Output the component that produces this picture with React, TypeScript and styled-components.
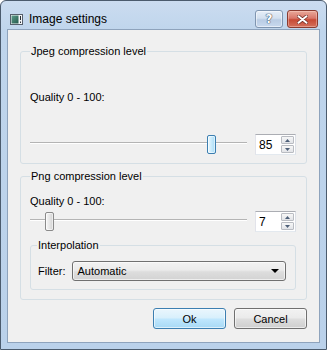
import styled, { createGlobalStyle } from 'styled-components';

const GlobalStyle = createGlobalStyle`
  html, body {
    margin: 0;
    padding: 0;
    background: #ffffff;
  }

  body {
    font-family: "Liberation Sans", Arial, sans-serif;
    font-size: 11px;
    color: #000;
  }
`;

function WindowIcon() {
  return (
    <svg width="13" height="11" viewBox="0 0 13 11">
      <defs>
        <linearGradient id="ico" x1="0" y1="0" x2="1" y2="1">
          <stop offset="0" stopColor="#5c9c8a" />
          <stop offset="1" stopColor="#245a4c" />
        </linearGradient>
      </defs>
      <rect x="0.5" y="0.5" width="12" height="10" fill="#f4f6f8" stroke="#56606c" />
      <rect x="1.5" y="1.5" width="7" height="8" fill="url(#ico)" />
      <rect x="10" y="2" width="1" height="4" fill="#2a2f36" />
      <rect x="10" y="7.5" width="1" height="1.5" fill="#2a2f36" />
    </svg>
  );
}

function CloseGlyph() {
  return (
    <svg width="11" height="9" viewBox="0 0 11 9">
      <path d="M1.5 1.2 L9.5 7.8 M9.5 1.2 L1.5 7.8" stroke="#6e2a22" strokeWidth="3.4" strokeLinecap="round" />
      <path d="M1.5 1.2 L9.5 7.8 M9.5 1.2 L1.5 7.8" stroke="#ffffff" strokeWidth="2" strokeLinecap="round" />
    </svg>
  );
}

function Arrow({ up, size = 5, color = '#4d5f78' }: { up?: boolean; size?: number; color?: string }) {
  const h = Math.ceil(size / 2) + 0;
  return (
    <svg width={size} height={h} viewBox={`0 0 ${size} ${h}`}>
      <path d={up ? `M0 ${h} L${size / 2} 0 L${size} ${h} Z` : `M0 0 L${size} 0 L${size / 2} ${h} Z`} fill={color} />
    </svg>
  );
}

type SliderProps = { value: number; hot?: boolean };

function Slider({ value, hot }: SliderProps) {
  return (
    <SliderTrackArea>
      <Groove />
      <Thumb $hot={hot} style={{ left: `calc((100% - 9px) * ${value / 100})` }} />
    </SliderTrackArea>
  );
}

function SpinBox({ value }: { value: number }) {
  return (
    <SpinField>
      <SpinValue>{value}</SpinValue>
      <SpinButtons>
        <SpinButton>
          <Arrow up />
        </SpinButton>
        <SpinButton>
          <Arrow />
        </SpinButton>
      </SpinButtons>
    </SpinField>
  );
}

function App() {
  return (
    <>
      <GlobalStyle />
      <Window>
        <TitleBar>
          <WindowIcon />
          <TitleText>Image settings</TitleText>
          <CaptionButtons>
            <HelpButton>?</HelpButton>
            <CloseButton>
              <CloseGlyph />
            </CloseButton>
          </CaptionButtons>
        </TitleBar>
        <Client>
          <Group $pb={8}>
            <Legend>Jpeg compression level</Legend>
            <FieldLabel $mt={33}>Quality 0 - 100:</FieldLabel>
            <SliderRow $mt={30}>
              <Slider value={85} hot />
              <SpinBox value={85} />
            </SliderRow>
          </Group>
          <Group $pb={9} style={{ marginTop: 6 }}>
            <Legend>Png compression level</Legend>
            <FieldLabel $mt={12}>Quality 0 - 100:</FieldLabel>
            <SliderRow $mt={3}>
              <Slider value={7} />
              <SpinBox value={7} />
            </SliderRow>
            <InnerGroup>
              <InnerLegend>Interpolation</InnerLegend>
              <FilterRow>
                <span>Filter:</span>
                <Combo>
                  <ComboText>Automatic</ComboText>
                  <Arrow size={8} color="#000" />
                </Combo>
              </FilterRow>
            </InnerGroup>
          </Group>
          <ButtonRow>
            <PushButton $default>Ok</PushButton>
            <PushButton>Cancel</PushButton>
          </ButtonRow>
        </Client>
      </Window>
    </>
  );
}

export default App;

const Window = styled.div`
  width: 327px;
  height: 350px;
  box-sizing: border-box;
  display: flex;
  flex-direction: column;
  padding: 0 6px 6px;
  border: 1px solid #4b5b6d;
  border-radius: 6px 6px 0 0;
  background: linear-gradient(180deg, #cbdcf0 0%, #bfd5ec 30px, #bad1ea 100%);
`;

const TitleBar = styled.div`
  height: 28px;
  box-sizing: border-box;
  display: flex;
  align-items: center;
  padding: 8px 2px 0 3px;
`;

const TitleText = styled.div`
  flex: 1;
  margin-left: 6px;
  font-size: 12px;
  color: #000;
`;

const CaptionButtons = styled.div`
  display: flex;
  gap: 4px;
`;

const CaptionButton = styled.div`
  height: 18px;
  box-sizing: border-box;
  display: flex;
  align-items: center;
  justify-content: center;
  border-radius: 3px;
`;

const HelpButton = styled(CaptionButton)`
  width: 28px;
  border: 1px solid #7f95b0;
  background: linear-gradient(180deg, #e6eef8 0%, #d3e0ef 45%, #b9cce4 55%, #c8d9ee 100%);
  box-shadow: inset 0 0 0 1px rgba(255, 255, 255, 0.5);
  font-family: "DejaVu Sans", sans-serif;
  font-weight: bold;
  font-size: 12px;
  color: #ffffff;
  text-shadow: 0 0 1px #3b4b60, 0 0 1px #3b4b60, 0 0 1px #3b4b60;
`;

const CloseButton = styled(CaptionButton)`
  width: 31px;
  border: 1px solid #8a3b30;
  background: linear-gradient(180deg, #e9a99a 0%, #d9776a 45%, #c74a35 55%, #d4705c 100%);
  box-shadow: inset 0 0 0 1px rgba(255, 220, 210, 0.4);
`;

const Client = styled.div`
  flex: 1;
  display: flex;
  flex-direction: column;
  padding: 15px 12px 0;
  border: 1px solid #8ea3bc;
  background: #f0f0f0;
`;

const Group = styled.fieldset<{ $pb: number }>`
  margin: 0;
  min-width: 0;
  display: flex;
  flex-direction: column;
  padding: 0 10px ${(p) => p.$pb}px 9px;
  border: 1px solid #d5dfe5;
  border-radius: 3px;
`;

const Legend = styled.legend`
  padding: 0 1px;
  line-height: 13px;
  font-size: 11px;
  color: #000;
`;

const FieldLabel = styled.div<{ $mt: number }>`
  margin-top: ${(p) => p.$mt}px;
  line-height: 13px;
`;

const SliderRow = styled.div<{ $mt: number }>`
  margin-top: ${(p) => p.$mt}px;
  display: flex;
  align-items: center;
  gap: 8px;
`;

const SliderTrackArea = styled.div`
  position: relative;
  flex: 1;
  height: 21px;
`;

const Groove = styled.div`
  position: absolute;
  left: 0;
  right: 0;
  top: 8px;
  height: 1px;
  background: #b4b4b4;
  box-shadow: 0 1px 0 #ffffff;
`;

const Thumb = styled.div<{ $hot?: boolean }>`
  position: absolute;
  top: 1px;
  width: 9px;
  height: 19px;
  box-sizing: border-box;
  border-radius: 2px;
  border: 1px solid ${(p) => (p.$hot ? '#3c7fb1' : '#8a8a8a')};
  background: ${(p) =>
    p.$hot
      ? 'linear-gradient(90deg, #eaf7fd 0%, #c9ebfc 50%, #a9dcf6 100%)'
      : 'linear-gradient(90deg, #f6f6f6 0%, #e6e6e6 50%, #d2d2d2 100%)'};
  box-shadow: inset 0 0 0 1px rgba(255, 255, 255, 0.55);
`;

const SpinField = styled.div`
  width: 41px;
  height: 21px;
  box-sizing: border-box;
  display: flex;
  align-items: center;
  padding-left: 3px;
  border: 1px solid;
  border-color: #abadb3 #dbdfe6 #e3e9ef #e2e3ea;
  background: #ffffff;
`;

const SpinValue = styled.div`
  flex: 1;
  font-size: 12px;
`;

const SpinButtons = styled.div`
  display: flex;
  flex-direction: column;
  gap: 1px;
  margin-right: 1px;
`;

const SpinButton = styled.div`
  width: 13px;
  height: 8px;
  box-sizing: border-box;
  display: flex;
  align-items: center;
  justify-content: center;
  border: 1px solid #b9bcc2;
  border-radius: 1px;
  background: linear-gradient(180deg, #f7f7f7, #e2e4e8);
`;

const InnerGroup = styled.fieldset`
  margin: 7px 0 0;
  min-width: 0;
  padding: 0 9px 8px 6px;
  border: 1px solid #d5dfe5;
  border-radius: 3px;
`;

const InnerLegend = styled(Legend)``;

const FilterRow = styled.div`
  margin-top: 9px;
  display: flex;
  align-items: center;
  gap: 6px;
  padding-left: 1px;
`;

const Combo = styled.div`
  flex: 1;
  height: 20px;
  box-sizing: border-box;
  display: flex;
  align-items: center;
  padding: 0 6px 0 5px;
  border: 1px solid #707070;
  border-radius: 3px;
  background: linear-gradient(180deg, #f2f2f2 0%, #ebebeb 45%, #dddddd 55%, #d3d3d3 100%);
  box-shadow: inset 0 0 0 1px rgba(255, 255, 255, 0.6);
`;

const ComboText = styled.div`
  flex: 1;
`;

const ButtonRow = styled.div`
  margin-top: 8px;
  display: flex;
  justify-content: flex-end;
  gap: 8px;
`;

const PushButton = styled.button<{ $default?: boolean }>`
  width: 73px;
  height: 21px;
  padding: 0;
  font-family: inherit;
  font-size: 11px;
  color: #000;
  border-radius: 3px;
  border: 1px solid ${(p) => (p.$default ? '#3c7fb1' : '#707070')};
  background: ${(p) =>
    p.$default
      ? 'linear-gradient(180deg, #eaf6fd 0%, #d9f0fc 45%, #bee6fd 55%, #a7d9f5 100%)'
      : 'linear-gradient(180deg, #f2f2f2 0%, #ebebeb 45%, #dddddd 55%, #cfcfcf 100%)'};
  box-shadow: inset 0 0 0 1px rgba(255, 255, 255, 0.6);
`;
